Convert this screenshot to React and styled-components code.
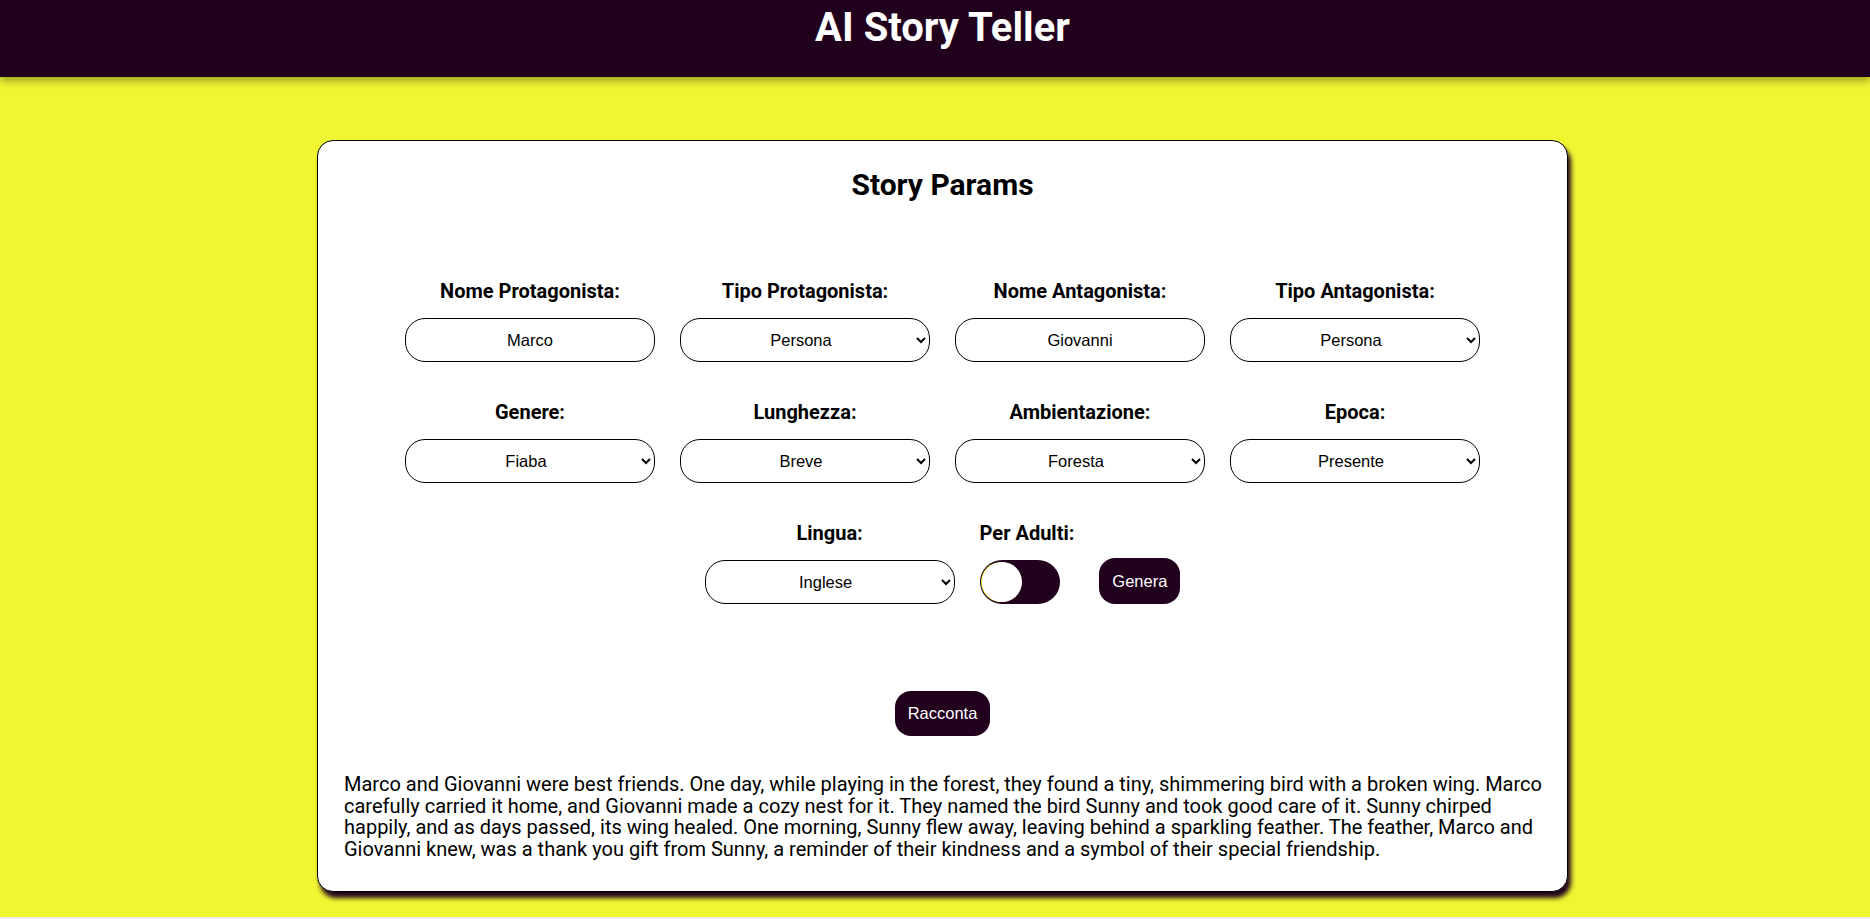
import React, { useState } from 'react'
import styled, { createGlobalStyle } from 'styled-components'

const GlobalStyle = createGlobalStyle`
  html, body {
    margin: 0;
    padding: 0;
    background: #eceff1;
  }
  body {
    font-family: Roboto, "Liberation Sans", sans-serif;
  }
`

const Page = styled.div`
  min-height: 917px;
  background: #f1f633;
`

const Header = styled.header`
  height: 77px;
  box-sizing: border-box;
  padding-left: 15px;
  background: #21001e;
  box-shadow: 0 4px 8px rgba(0, 0, 0, 0.35);
`

const AppTitle = styled.h1`
  margin: 0;
  padding-top: 4px;
  text-align: center;
  color: #fff;
  font: 700 40px/47px Roboto, sans-serif;
`

const Main = styled.main`
  padding: 63px 0 0 15px;
`

const Card = styled.section`
  width: 1251px;
  box-sizing: border-box;
  margin: 0 auto;
  padding: 26px 26px 31px;
  background: #fff;
  border: 1px solid #000;
  border-radius: 16px;
  box-shadow: 3px 6px 5px #21001e;
`

const CardTitle = styled.h2`
  margin: 0;
  text-align: center;
  color: #000;
  font: 700 30px/35px Roboto, sans-serif;
`

const Form = styled.div`
  display: flex;
  flex-direction: column;
  gap: 39px;
  margin-top: 78px;
`

const Row = styled.div`
  display: flex;
  justify-content: center;
  align-items: flex-end;
  gap: 25px;
`

const Field = styled.div`
  display: flex;
  flex-direction: column;
  align-items: ${({ $start }) => ($start ? 'flex-start' : 'center')};
  gap: 16px;
`

const Label = styled.label`
  color: #000;
  font: 700 20px/22px Roboto, sans-serif;
  white-space: nowrap;
`

const TextInput = styled.input`
  width: 250px;
  height: 44px;
  box-sizing: border-box;
  padding: 0 12px;
  border: 1px solid #000;
  border-radius: 20px;
  background: #fff;
  color: #000;
  text-align: center;
  font: 16.5px "Liberation Sans", Arial, sans-serif;
  outline: none;
`

const Select = styled.select`
  width: 250px;
  height: 44px;
  box-sizing: border-box;
  padding: 0 8px 0 12px;
  border: 1px solid #000;
  border-radius: 20px;
  background: #fff;
  color: #000;
  text-align: center;
  text-align-last: center;
  font: 16.5px "Liberation Sans", Arial, sans-serif;
  outline: none;
`

const SwitchBox = styled.label`
  position: relative;
  display: block;
  width: 80px;
  height: 44px;
  cursor: pointer;

  input {
    opacity: 0;
    width: 0;
    height: 0;
    position: absolute;
  }
`

const Track = styled.span`
  position: absolute;
  inset: 0;
  border-radius: 22px;
  background: #21001e;

  &::before {
    content: '';
    position: absolute;
    top: 2px;
    left: ${({ $on }) => ($on ? '38px' : '2px')};
    width: 40px;
    height: 40px;
    border-radius: 50%;
    background: #fff;
    box-shadow: -1px 0 0 0 #f1f633;
    transition: left 0.2s;
  }
`

const ActionButton = styled.button`
  height: ${({ $h }) => $h}px;
  padding: 0 13px;
  border: none;
  border-radius: 16px;
  background: #21001e;
  color: #fff;
  font: 16.5px "Liberation Sans", Arial, sans-serif;
  cursor: pointer;
`

const Center = styled.div`
  display: flex;
  justify-content: center;
  margin-top: 87px;
`

const Story = styled.p`
  margin: 38px -6px 0 0;
  color: #000;
  font: 20px/21.5px Roboto, sans-serif;
`

const rows = [
  [
    { label: 'Nome Protagonista:', value: 'Marco' },
    { label: 'Tipo Protagonista:', value: 'Persona', options: ['Persona', 'Animale', 'Robot', 'Creatura magica'] },
    { label: 'Nome Antagonista:', value: 'Giovanni' },
    { label: 'Tipo Antagonista:', value: 'Persona', options: ['Persona', 'Animale', 'Robot', 'Creatura magica'] },
  ],
  [
    { label: 'Genere:', value: 'Fiaba', options: ['Fiaba', 'Avventura', 'Fantascienza', 'Horror', 'Giallo'] },
    { label: 'Lunghezza:', value: 'Breve', options: ['Breve', 'Media', 'Lunga'] },
    { label: 'Ambientazione:', value: 'Foresta', options: ['Foresta', 'Città', 'Spazio', 'Mare', 'Castello'] },
    { label: 'Epoca:', value: 'Presente', options: ['Presente', 'Passato', 'Futuro', 'Medioevo'] },
  ],
]

const storyText =
  'Marco and Giovanni were best friends. One day, while playing in the forest, they found a tiny, shimmering bird with a broken wing. Marco carefully carried it home, and Giovanni made a cozy nest for it. They named the bird Sunny and took good care of it. Sunny chirped happily, and as days passed, its wing healed. One morning, Sunny flew away, leaving behind a sparkling feather. The feather, Marco and Giovanni knew, was a thank you gift from Sunny, a reminder of their kindness and a symbol of their special friendship.'

function ParamField({ label, value, options }) {
  const [val, setVal] = useState(value)
  return (
    <Field>
      <Label>{label}</Label>
      {options ? (
        <Select value={val} onChange={(e) => setVal(e.target.value)}>
          {options.map((o) => (
            <option key={o} value={o}>{o}</option>
          ))}
        </Select>
      ) : (
        <TextInput type="text" value={val} onChange={(e) => setVal(e.target.value)} />
      )}
    </Field>
  )
}

export default function App() {
  const [adult, setAdult] = useState(false)

  return (
    <>
      <GlobalStyle />
      <Page>
        <Header>
          <AppTitle>AI Story Teller</AppTitle>
        </Header>
        <Main>
          <Card>
            <CardTitle>Story Params</CardTitle>
            <Form>
              {rows.map((row, i) => (
                <Row key={i}>
                  {row.map((f) => (
                    <ParamField key={f.label} {...f} />
                  ))}
                </Row>
              ))}
              <Row>
                <ParamField label="Lingua:" value="Inglese" options={['Inglese', 'Italiano', 'Francese', 'Spagnolo', 'Tedesco']} />
                <Field $start>
                  <Label>Per Adulti:</Label>
                  <SwitchBox>
                    <input type="checkbox" checked={adult} onChange={() => setAdult(!adult)} />
                    <Track $on={adult} />
                  </SwitchBox>
                </Field>
                <ActionButton $h={46}>Genera</ActionButton>
              </Row>
            </Form>
            <Center>
              <ActionButton $h={45}>Racconta</ActionButton>
            </Center>
            <Story>{storyText}</Story>
          </Card>
        </Main>
      </Page>
    </>
  )
}
